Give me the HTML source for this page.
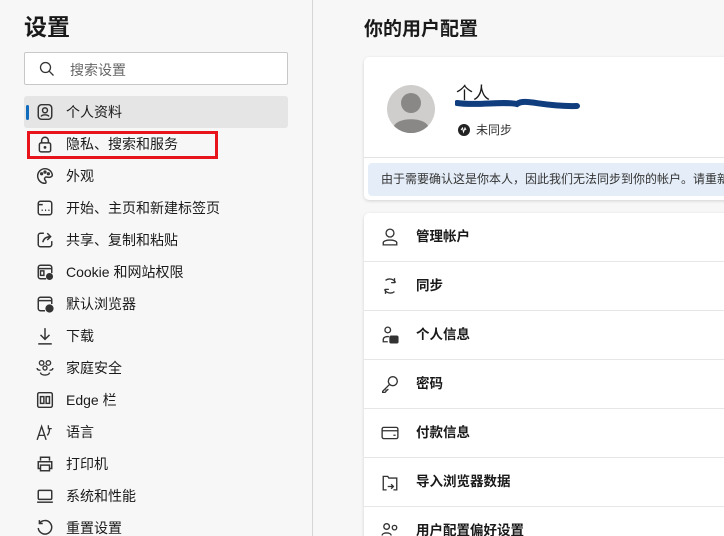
<!DOCTYPE html><html><head><meta charset="utf-8"><style>
*{margin:0;padding:0;box-sizing:border-box}
html{width:724px;height:536px;overflow:hidden}
body{width:724px;height:536px;overflow:hidden;background:#f7f7f7;font-family:"Liberation Sans","Noto Sans CJK SC",sans-serif;color:#1a1a1a;position:relative}
.abs{position:absolute}
.side{left:0;top:0;width:313px;height:536px;border-right:1px solid #d6d6d6}
h1{position:absolute;left:24px;top:8px;font-size:23px;font-weight:bold}
.search{left:24px;top:52px;width:264px;height:33px;background:#fff;border:1px solid #c8c8c8;border-radius:2px}
.search span{position:absolute;left:45px;top:7px;font-size:14px;color:#666}
.item{position:absolute;left:24px;width:264px;height:32px;font-size:14px;line-height:32px;padding-left:42px}
.item svg{position:absolute;left:12px;top:7px;width:18px;height:18px}
.active{background:#e5e5e5;border-radius:3px}
.active:before{content:"";position:absolute;left:2px;top:9px;width:3px;height:15px;background:#0f6cbd;border-radius:2px}
.red{left:27px;top:131px;width:191px;height:28px;border:3px solid #e8141c}
h2{position:absolute;left:364px;top:14px;font-size:19px;font-weight:bold}
.card{background:#fff;border-radius:5px;box-shadow:0 1px 3px rgba(0,0,0,.15)}
.row{position:absolute;left:0;width:360px;height:49px;border-top:1px solid #e6e6e6;font-size:13.5px;font-weight:bold;line-height:48px;padding-left:52px}
.row svg{position:absolute;left:17px;top:15px;width:18px;height:18px}
</style></head><body>
<div class="abs side"></div>
<h1>设置</h1>
<div class="abs search"><svg class="abs" style="left:14px;top:8px" width="16" height="16" viewBox="0 0 16 16" fill="none" stroke="#333" stroke-width="1.3"><circle cx="6.5" cy="6.5" r="5"/><path d="M10.2 10.2L14.5 14.5"/></svg><span>搜索设置</span></div>
<div class="item active" style="top:96px"><svg viewBox="0 0 16 16" fill="none" stroke="#333" stroke-width="1.3"><rect x="2" y="1.5" width="12" height="13" rx="3"/><circle cx="8" cy="6.5" r="2.2"/><path d="M4.5 12c1-2 6-2 7 0"/></svg>个人资料</div>
<div class="item" style="top:128px"><svg viewBox="0 0 16 16" fill="none" stroke="#333" stroke-width="1.3"><rect x="3" y="7" width="10" height="8" rx="1.5"/><path d="M5 7V5a3 3 0 016 0v2"/><circle cx="8" cy="11" r=".6" fill="#333"/></svg>隐私、搜索和服务</div>
<div class="item" style="top:160px"><svg viewBox="0 0 16 16" fill="none" stroke="#333" stroke-width="1.3"><path d="M8 1.5a6.5 6.5 0 100 13c1.5 0 1-2 0-3s0-3 2-2.5 4.5 0 4.5-2A6.5 6.5 0 008 1.5z"/><circle cx="5" cy="6" r=".8"/><circle cx="8" cy="4.5" r=".8"/><circle cx="11" cy="6" r=".8"/></svg>外观</div>
<div class="item" style="top:192px"><svg viewBox="0 0 16 16" fill="none" stroke="#333" stroke-width="1.3"><rect x="2" y="2" width="12" height="12" rx="2"/><path d="M2 5h4M5 10h1M8 10h1M11 10h1"/></svg>开始、主页和新建标签页</div>
<div class="item" style="top:224px"><svg viewBox="0 0 16 16" fill="none" stroke="#333" stroke-width="1.3"><path d="M7 2H4a2 2 0 00-2 2v8a2 2 0 002 2h8a2 2 0 002-2V9"/><path d="M6 10c1-4 4-5 7-5M10 2l3 3-3 3"/></svg>共享、复制和粘贴</div>
<div class="item" style="top:256px"><svg viewBox="0 0 16 16" fill="none" stroke="#333" stroke-width="1.3"><path d="M9 14H4a2 2 0 01-2-2V4a2 2 0 012-2h8a2 2 0 012 2v5M2 5h12"/><rect x="4" y="7" width="3" height="4"/><circle cx="12" cy="12" r="2.5" fill="#333"/></svg>Cookie 和网站权限</div>
<div class="item" style="top:288px"><svg viewBox="0 0 16 16" fill="none" stroke="#333" stroke-width="1.3"><path d="M8 14H4a2 2 0 01-2-2V4a2 2 0 012-2h8a2 2 0 012 2v4M2 5h12"/><circle cx="12" cy="12" r="3" fill="#333"/></svg>默认浏览器</div>
<div class="item" style="top:320px"><svg viewBox="0 0 16 16" fill="none" stroke="#333" stroke-width="1.3"><path d="M8 1v10M4 7l4 4 4-4M2 15h12"/></svg>下载</div>
<div class="item" style="top:352px"><svg viewBox="0 0 16 16" fill="none" stroke="#333" stroke-width="1.2"><circle cx="5" cy="3.5" r="2"/><circle cx="11" cy="3.5" r="2"/><circle cx="8" cy="8" r="1.8"/><path d="M1 8c0 2 2 2 3 2M15 8c0 2-2 2-3 2M4 12c0 3 8 3 8 0"/></svg>家庭安全</div>
<div class="item" style="top:384px"><svg viewBox="0 0 16 16" fill="none" stroke="#333" stroke-width="1.3"><rect x="1.5" y="1.5" width="13" height="13" rx="1.5"/><rect x="4" y="5" width="3" height="6"/><rect x="9" y="5" width="3" height="6"/></svg>Edge 栏</div>
<div class="item" style="top:416px"><svg viewBox="0 0 16 16" fill="none" stroke="#333" stroke-width="1.2"><path d="M1 15L5 3l4 12M2.5 11h5M11 2v3h3M12 5c0 3-1 5-2 6"/></svg>语言</div>
<div class="item" style="top:448px"><svg viewBox="0 0 16 16" fill="none" stroke="#333" stroke-width="1.3"><path d="M4 5V2h8v3M4 12H2V6h12v6h-2"/><rect x="4" y="9" width="8" height="5"/></svg>打印机</div>
<div class="item" style="top:480px"><svg viewBox="0 0 16 16" fill="none" stroke="#333" stroke-width="1.3"><rect x="2" y="3" width="12" height="8" rx="1"/><path d="M1 13.5h14"/></svg>系统和性能</div>
<div class="item" style="top:512px"><svg viewBox="0 0 16 16" fill="none" stroke="#333" stroke-width="1.3"><path d="M3 4a6 6 0 11-1 4M3 1v3h3"/></svg>重置设置</div>
<div class="abs red"></div>

<h2>你的用户配置</h2>
<div class="abs card" style="left:364px;top:57px;width:370px;height:143px">
 <svg class="abs" style="left:22px;top:27px" width="50" height="50" viewBox="0 0 50 50"><circle cx="25" cy="25" r="24" fill="#d0cecc"/><circle cx="25" cy="19" r="10" fill="#8a8886"/><path d="M8 42c4-9 30-9 34 0a24 24 0 01-34 0z" fill="#8a8886"/></svg>
 <div class="abs" style="left:92px;top:22px;font-size:17px">个人</div>
 <svg class="abs" style="left:91px;top:41px" width="130" height="14"><path d="M2 5c20 3 45-2 60 1 8-6 25 3 60 2" stroke="#0f3d7e" stroke-width="6" fill="none" stroke-linecap="round"/></svg>
 <svg class="abs" style="left:94px;top:67px" width="12" height="12" viewBox="0 0 12 12"><circle cx="6" cy="6" r="6" fill="#222"/><path d="M3 6l1.5-2 1 4 1.5-4 1 2" stroke="#fff" fill="none"/></svg>
 <div class="abs" style="left:112px;top:64px;font-size:12px;color:#333">未同步</div>
 <div class="abs" style="left:0;top:100px;width:370px;border-top:1px solid #e3e3e3"></div>
 <div class="abs" style="left:4px;top:106px;width:370px;height:33px;background:#e5eef8;border-radius:4px;font-size:12px;line-height:33px;padding-left:13px;color:#333;white-space:nowrap;overflow:hidden">由于需要确认这是你本人，因此我们无法同步到你的帐户。请重新登录</div>
</div>
<div class="abs card" style="left:364px;top:213px;width:370px;height:340px">
 <div class="row" style="top:0;border-top:none"><svg viewBox="0 0 14 16" fill="none" stroke="#333" stroke-width="1.2"><circle cx="7" cy="4.5" r="3.5"/><path d="M1 13c0-3 12-3 12 0v2H1z"/></svg>管理帐户</div>
 <div class="row" style="top:48px"><svg viewBox="0 0 16 16" fill="none" stroke="#333" stroke-width="1.2"><path d="M4 3a6 6 0 019 2M12 13a6 6 0 01-9-2M12 1v4H9M4 15v-4h3"/></svg>同步</div>
 <div class="row" style="top:97px"><svg viewBox="0 0 16 16" fill="none" stroke="#333" stroke-width="1.2"><circle cx="6" cy="3.5" r="2.5"/><path d="M6 14H2v-2c0-2 3-3 5-2.5"/><rect x="8" y="9" width="7" height="6" rx="1" fill="#333"/></svg>个人信息</div>
 <div class="row" style="top:146px"><svg viewBox="0 0 16 16" fill="none" stroke="#333" stroke-width="1.2"><circle cx="10.5" cy="5.5" r="4"/><path d="M7.5 8.5L1.5 14.5v1h2l1-1v-1h1l1-1"/></svg>密码</div>
 <div class="row" style="top:195px"><svg viewBox="0 0 16 16" fill="none" stroke="#333" stroke-width="1.2"><rect x="1" y="3" width="14" height="10" rx="1.5"/><path d="M1 6h14M11 10h2"/></svg>付款信息</div>
 <div class="row" style="top:244px"><svg viewBox="0 0 16 16" fill="none" stroke="#333" stroke-width="1.2"><path d="M5 15H2V3h4l1 1.5h7V15h-3M6 12h5M9 10l2 2-2 2"/></svg>导入浏览器数据</div>
 <div class="row" style="top:293px"><svg viewBox="0 0 16 16" fill="none" stroke="#333" stroke-width="1.2"><circle cx="5" cy="4" r="2.5"/><circle cx="12" cy="5" r="2"/><path d="M1 12c0-3 8-3 8 0"/></svg>用户配置偏好设置</div>
</div>
</body></html>
